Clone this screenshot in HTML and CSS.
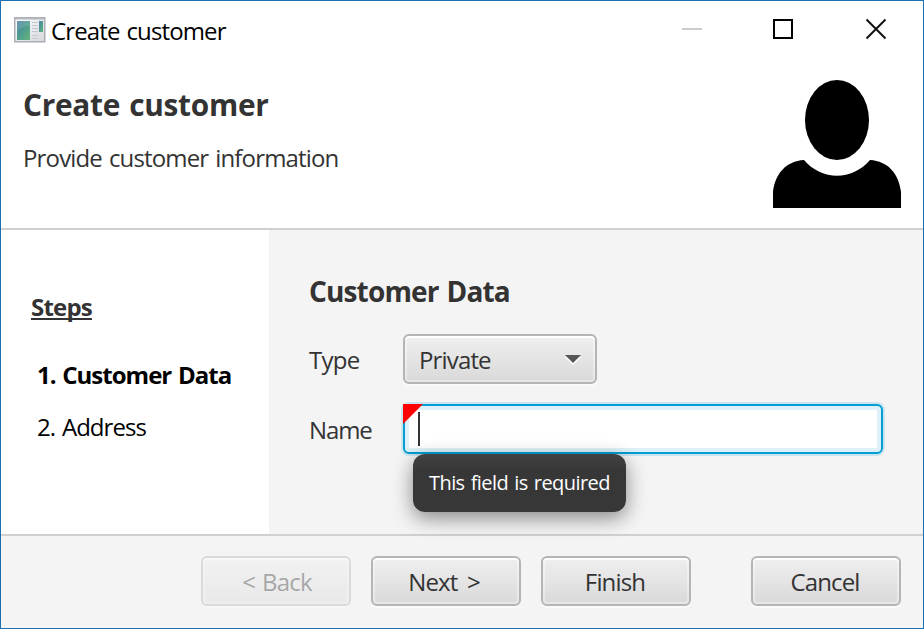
FILE: index.html
```html
<!DOCTYPE html>
<html lang="en">
<head>
<meta charset="utf-8">
<title>Create customer</title>
<link rel="stylesheet" href="styles.css">
</head>
<body>
<div class="window">
  <div class="titlebar">
    <svg class="app-icon" width="32" height="26" viewBox="0 0 32 26">
      <defs>
        <linearGradient id="pane" x1="0" y1="0" x2="1" y2="1"><stop offset="0" stop-color="#4f82ad"/><stop offset=".5" stop-color="#4f9d8e"/><stop offset="1" stop-color="#62b57d"/></linearGradient>
        <linearGradient id="frame" x1="0" y1="0" x2="1" y2="1"><stop offset="0" stop-color="#fff"/><stop offset="1" stop-color="#d5d7dc"/></linearGradient>
      </defs>
      <rect x=".75" y=".75" width="30" height="24" fill="url(#frame)" stroke="#a9adb4" stroke-width="1.5"/>
      <path d="M1 1.500H31" stroke="#b4b8bf" stroke-width="2"/>
      <rect x="3" y="4" width="13" height="19" fill="url(#pane)"/>
      <path d="M3 14Q8 9 16 9V4H3Z" fill="#fff" opacity=".12"/>
      <path d="M18 5.500h6M18 8.500h6M18 11.500h6M18 14.500h6M18 18.500h6M18 21.500h6" stroke="#c5c8ce"/>
      <rect x="25" y="4" width="4" height="11" fill="url(#pane)"/>
    </svg>
    <span class="title">Create customer</span>
    <svg class="controls" width="206" height="24" viewBox="0 0 206 24">
      <path d="M0 12H20" stroke="#ccc" stroke-width="2"/>
      <rect x="92" y="3" width="18" height="18" fill="none" stroke="#000" stroke-width="2"/>
      <path d="M184.500 2.500 203.500 21.500M203.500 2.500 184.500 21.500" stroke="#111" stroke-width="2"/>
    </svg>
  </div>
  <header class="header">
    <div>
      <h1>Create customer</h1>
      <p>Provide customer information</p>
    </div>
    <svg class="person" width="128" height="128" viewBox="0 0 128 128">
      <ellipse cx="64" cy="40" rx="32" ry="40"/>
      <path d="M0 128V112C2 94 13 81 31 80C49 101 79 101 97 80C115 81 126 94 128 112V128Z"/>
    </svg>
  </header>
  <div class="body">
    <aside class="steps">
      <h3>Steps</h3>
      <div class="step current">1. Customer Data</div>
      <div class="step">2. Address</div>
    </aside>
    <main class="page">
      <h2>Customer Data</h2>
      <div class="form">
        <span class="label type">Type</span>
        <div class="control combo"><span>Private</span><svg width="16" height="10" viewBox="0 0 16 10"><path d="M0 2H16L8 10Z" fill="#fff"/><path d="M0 0H16L8 8Z" fill="#555"/></svg></div>
        <span class="label name">Name</span>
        <div class="field">
          <svg class="required" width="20" height="20" viewBox="0 0 20 20"><path d="M0 0H20L0 20Z" fill="red"/></svg>
          <span class="caret"></span>
          <div class="tooltip"><span>This field is required</span></div>
        </div>
      </div>
    </main>
  </div>
  <footer class="footer">
    <div class="control btn disabled"><span class="back">&lt; Back</span></div>
    <div class="control btn"><span class="next">Next &gt;</span></div>
    <div class="control btn"><span class="finish">Finish</span></div>
    <div class="control btn last"><span class="cancel">Cancel</span></div>
  </footer>
</div>
</body>
</html>
```
FILE: styles.css
```css
* { box-sizing: border-box; }
body { margin: 0; }
h1, h2, h3, p { margin: 0; }
.window {
  width: 924px; height: 629px; border: 1px solid #1a70b4; background: #fff;
  display: flex; flex-direction: column; overflow: hidden;
  font: 24px/32px "Open Sans", "Noto Sans", sans-serif; color: #333;
  white-space: nowrap; word-spacing: 1.5px;
}
.titlebar { height: 58px; padding: 0 35px 0 13px; display: flex; align-items: center; color: #000; }
.title { margin-left: 5px; padding-top: 1px; letter-spacing: -0.87px; }
.controls { margin: -2px 0 0 auto; }
.header { height: 171px; border-bottom: 2px solid #d0d0d0; padding: 22px 22px 0; display: flex; justify-content: space-between; }
.person { margin-top: -1px; }
h1 { font-size: 29.8px; line-height: 48px; letter-spacing: -0.25px; }
.header p { margin-top: 13px; letter-spacing: -0.84px; }
.body { height: 304px; display: flex; }
.steps { width: 268px; padding: 61px 0 0 30px; color: #000; }
h3 { font-size: 24px; color: #333; letter-spacing: -0.8px; text-decoration: underline; text-decoration-thickness: 2px; text-underline-offset: 2px; text-decoration-skip-ink: none; }
.step { margin: 20px 0 0 6px; letter-spacing: -0.95px; }
.current { margin-top: 36px; font-weight: 700; letter-spacing: -1px; }
.page { flex: 1; background: #f4f4f4; padding: 41px 40px 0; }
h2 { font-size: 28px; line-height: 40px; letter-spacing: -0.85px; }
.form { margin-top: 23px; display: grid; grid-template-columns: 94px 480px; row-gap: 20px; align-items: center; }
.label { letter-spacing: -0.7px; padding-top: 1px; }
.name { letter-spacing: -1.1px; }
.control {
  height: 50px; border: 2px solid #b5b5b5; border-radius: 6px;
  background: linear-gradient(#efefef, #d9d9d9) padding-box;
  box-shadow: inset 0 0 0 2px rgba(255,255,255,.35), inset 0 2px 0 #fff, 0 2px 0 #fafafa;
  display: flex; align-items: center; letter-spacing: -0.85px;
}
.control span { padding-top: 1px; }
.combo { width: 194px; padding: 0 14px; justify-content: space-between; }
.combo svg { margin-top: 2px; }
.field {
  position: relative; height: 50px; background: #fff; border: 2px solid #039ed3; border-radius: 6px;
  box-shadow: 0 0 0 2px #cbe5ee, inset 0 0 0 4px #dff1f8; padding: 6px 13px;
}
.required { position: absolute; left: -2px; top: -2px; }
.caret { display: block; width: 2px; height: 34px; background: #333; }
.tooltip {
  position: absolute; left: 8px; top: 48px; width: 213px; height: 58px; border-radius: 12px;
  background: linear-gradient(#424242, #373737 30%, #373737); color: #fff; font-size: 20px;
  box-shadow: 0 6px 20px rgba(0,0,0,.45); display: flex; align-items: center; padding: 0 16px;
  letter-spacing: -0.57px;
}
.footer { flex: 1; background: #f4f4f4; border-top: 2px solid #d0d0d0; padding: 20px 22px 0 200px; display: flex; gap: 20px; }
.btn { width: 150px; justify-content: center; }
.back { margin-left: 2px; }
.next { word-spacing: 4px; margin-left: -4px; }
.finish, .cancel { margin-left: -2px; }
.last { margin-left: auto; }
.disabled { opacity: .4; }
```
